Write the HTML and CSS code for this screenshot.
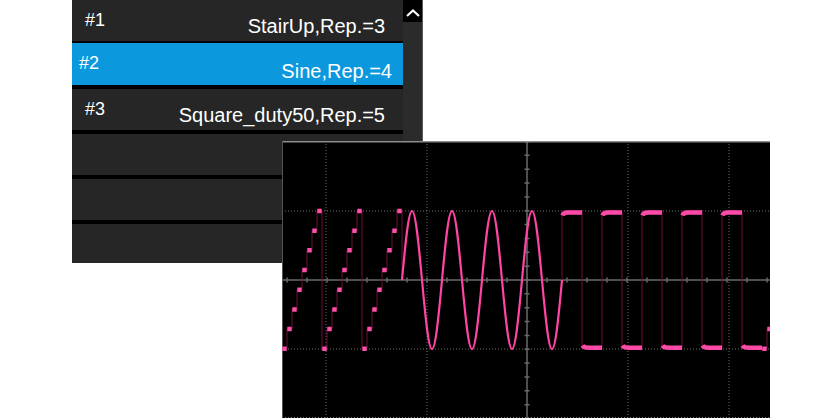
FILE: index.html
```html
<!DOCTYPE html>
<html lang="en">
<head>
    <meta charset="UTF-8">
    <meta name="viewport" content="width=device-width, initial-scale=1.0">
    <title>Sequence List</title>
    <link rel="stylesheet" href="styles.css">
</head>
<body>
    <div class="stage">
        <!-- sequence list -->
        <div class="panel">
            <div class="list">
                <div class="row"><span class="num">#1</span><span class="name">StairUp,Rep.=3</span></div>
                <div class="row active"><span class="num">#2</span><span class="name">Sine,Rep.=4</span></div>
                <div class="row"><span class="num">#3</span><span class="name">Square_duty50,Rep.=5</span></div>
                <div class="row"></div>
                <div class="row"></div>
                <div class="row"></div>
            </div>
            <div class="scrollbar">
                <div class="scroll-up">
                    <svg width="14" height="8" viewBox="0 0 14 8"><path d="M1 7L7 1.5L13 7" fill="none" stroke="#fff" stroke-width="2.2"/></svg>
                </div>
            </div>
        </div>

        <!-- scope screen, lies over the list -->
        <div class="scope">
            <svg width="488" height="277" viewBox="0 0 488 277">
                <defs>
                    <path id="hi" class="level" d="M280.5 74.5Q281.5 71.5 286 71.5H300"/>
                    <path id="lo" class="level" d="M300.5 204.5Q302 206.8 307 206.8H320"/>
                </defs>
                <path class="grid" d="M0 70H488M0 208H488M0 276.5H488M44 0V277M145 0V277M346 0V277M447 0V277"/>
                <path class="axis" d="M0 139H488M245 0V277"/>
                <path class="ticks-h" d="M0 139H488"/>
                <path class="ticks-v" d="M245 0V277"/>
                <path class="frame-top" d="M0 0.75H488"/>
                <path class="frame" d="M0.5 0V277"/>

                <path class="edges" d="M0 207.75h5v-19.68h5v-19.68h5v-19.68h5v-19.68h5v-19.68h5v-19.68h5v-19.68h5v137.75h5v-19.68h5v-19.68h5v-19.68h5v-19.68h5v-19.68h5v-19.68h5v-19.68h5v137.75h5v-19.68h5v-19.68h5v-19.68h5v-19.68h5v-19.68h5v-19.68h5v-19.68h5V139M280 139V70H300V207H320V70H340V207H360V70H380V207H400V70H420V207H440V70H460V207H480V207.75h5v-19.68h3"/>

                <path class="sine" d="M120 139C123.26 103.65 126.38 70 130 70S136.74 103.65 140 139S146.38 208 150 208S156.74 174.35 160 139S166.38 70 170 70S176.74 103.65 180 139S186.38 208 190 208S196.74 174.35 200 139S206.38 70 210 70S216.74 103.65 220 139S226.38 208 230 208S236.74 174.35 240 139S246.38 70 250 70S256.74 103.65 260 139S266.38 208 270 208S276.74 174.35 280 139"/>

                <path class="steps" d="M0.3 207.75h4.4m0.6-19.68h4.4m0.6-19.68h4.4m0.6-19.68h4.4m0.6-19.68h4.4m0.6-19.68h4.4m0.6-19.68h4.4m0.6-19.68h4.4m0.6 137.76h4.4m0.6-19.68h4.4m0.6-19.68h4.4m0.6-19.68h4.4m0.6-19.68h4.4m0.6-19.68h4.4m0.6-19.68h4.4m0.6-19.68h4.4m0.6 137.76h4.4m0.6-19.68h4.4m0.6-19.68h4.4m0.6-19.68h4.4m0.6-19.68h4.4m0.6-19.68h4.4m0.6-19.68h4.4m0.6-19.68h4.4M480.3 207.75h4.4m0.6-19.68h4.4"/>

                <use href="#hi"/>
                <use href="#hi" x="40"/>
                <use href="#hi" x="80"/>
                <use href="#hi" x="120"/>
                <use href="#hi" x="160"/>
                <use href="#lo"/>
                <use href="#lo" x="40"/>
                <use href="#lo" x="80"/>
                <use href="#lo" x="120"/>
                <use href="#lo" x="160"/>
            </svg>
        </div>
    </div>
</body>
</html>
```

FILE: styles.css
```css
body {
    margin: 0;
    background-color: #fff;
    font-family: "Liberation Sans", Arial, sans-serif;
}
.stage {
    position: relative;
    width: 840px;
    height: 420px;
    overflow: hidden;
}
.panel {
    display: flex;
    width: 351px;
    height: 263px;
    margin-left: 72px;
    background-color: #000;
    overflow: hidden;
}
.list {
    flex: 1;
    display: flex;
    flex-direction: column;
    gap: 4px;
}
.row {
    flex: none;
    height: 41px;
    box-sizing: border-box;
    display: flex;
    justify-content: space-between;
    align-items: flex-start;
    padding: 11px 18px 0 13px;
    background-color: #262626;
    color: #fff;
}
.row.active {
    height: 42px;
    margin-top: -2px;
    padding: 11px 11px 0 7px;
    background-color: #0b98dd;
}
.num {
    font-size: 18px;
    line-height: 18px;
}
.name {
    font-size: 20px;
    line-height: 20px;
    margin-top: 4.5px;
}
.row.active .name {
    margin-top: 6.5px;
}
.scrollbar {
    width: 19px;
    background-color: #2b2b2b;
    border-right: 1px solid #5a5a5a;
}
.scroll-up {
    height: 22px;
    box-sizing: border-box;
    padding-top: 3px;
    display: flex;
    align-items: center;
    justify-content: center;
    background-color: #000;
}
.scope {
    position: absolute;
    left: 282px;
    top: 141px;
    width: 488px;
    height: 277px;
    background-color: #000;
}
.scope svg {
    display: block;
}
.grid {
    fill: none;
    stroke: #6e6e6e;
    stroke-width: 1;
    stroke-dasharray: 1 2;
}
.axis {
    fill: none;
    stroke: #6a6a6a;
    stroke-width: 1.5;
}
.ticks-h {
    stroke: #6a6a6a;
    stroke-width: 5;
    stroke-dasharray: 1.5 18.5;
    stroke-dashoffset: 15.75;
}
.ticks-v {
    stroke: #6a6a6a;
    stroke-width: 5;
    stroke-dasharray: 1.5 12.35;
    stroke-dashoffset: 0.25;
}
.frame-top {
    stroke: #8c8c8c;
    stroke-width: 1.5;
}
.frame {
    stroke: #555;
    stroke-width: 1;
}
.edges {
    fill: none;
    stroke: #6e1038;
    stroke-width: 1;
}
.sine {
    fill: none;
    stroke: #ff44a4;
    stroke-width: 2.2;
}
.steps {
    fill: none;
    stroke: #ff4faa;
    stroke-width: 4.5;
}
.level {
    fill: none;
    stroke: #ff4aa8;
    stroke-width: 4.5;
}
```
